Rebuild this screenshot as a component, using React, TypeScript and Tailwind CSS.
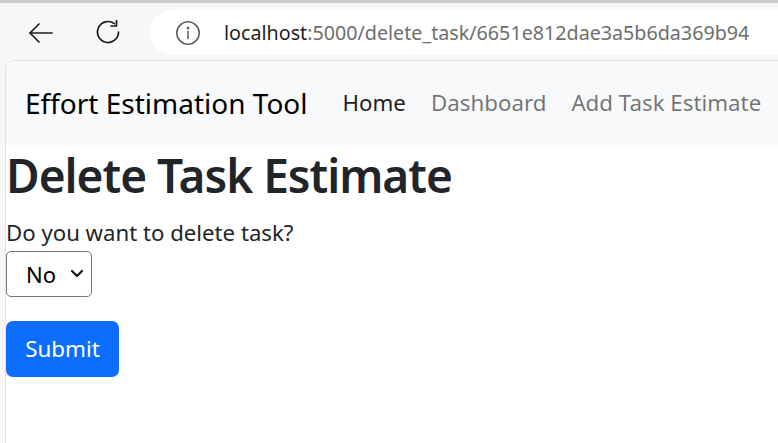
import React from "react";

const BackIcon = () => (
  <svg width="26" height="22" viewBox="0 0 26 22" fill="none" stroke="#1f1f1f" strokeWidth="1.7" strokeLinecap="round" strokeLinejoin="round">
    <path d="M24 11H2" />
    <path d="M11 2L2 11l9 9" />
  </svg>
);

const ReloadIcon = () => (
  <svg width="26" height="26" viewBox="0 0 26 26" fill="none" stroke="#1f1f1f" strokeWidth="1.7" strokeLinecap="round" strokeLinejoin="round">
    <path d="M23.5 13A10.5 10.5 0 1 1 19.4 4.7" />
    <path d="M21.5 1.5v5.5H16" />
  </svg>
);

const InfoIcon = () => (
  <svg width="26" height="26" viewBox="0 0 26 26" fill="none" stroke="#5f6368" strokeWidth="1.6">
    <circle cx="13" cy="13" r="11.2" />
    <path d="M13 11.5v7" strokeLinecap="round" />
    <circle cx="13" cy="8" r="0.7" fill="#5f6368" />
  </svg>
);

export default function App() {
  return (
    <div className="w-[778px] h-[443px] bg-[#f7f7f7] overflow-hidden flex flex-col font-['Noto_Sans',sans-serif]">
      <div className="h-[3px] bg-[#cccccc]" />
      <div className="h-[57px] flex items-center">
        <div className="ml-[28px] mt-[3px] flex">
          <BackIcon />
        </div>
        <div className="ml-[41px] mt-[1px] flex">
          <ReloadIcon />
        </div>
        <div className="ml-[29px] mt-[2px] flex-1 h-[45px] bg-white rounded-l-full flex items-center">
          <div className="ml-[25px] flex">
            <InfoIcon />
          </div>
          <div className="ml-[23px] text-[19.7px] whitespace-nowrap">
            <span className="text-[#1f1f1f]">localhost</span>
            <span className="text-[#6e6e6e]">:5000/delete_task/6651e812dae3a5b6da369b94</span>
          </div>
        </div>
      </div>
      <div className="flex-1 ml-[5px] bg-white rounded-tl-[9px] border-l border-t border-[#e2e2e2] overflow-hidden">
        <nav className="h-[84px] bg-[#f8f9fa] flex items-center pl-[19px]">
          <span className="text-[28px] text-black">Effort Estimation Tool</span>
          <div className="flex ml-[35px] gap-[25px] text-[22.3px]">
            <a className="text-black/90">Home</a>
            <a className="text-black/55">Dashboard</a>
            <a className="text-black/55">Add Task Estimate</a>
          </div>
        </nav>
        <div className="text-[#212529]">
          <h1 className="text-[46px] font-semibold tracking-[-1px] leading-[55px] mt-[3px] whitespace-nowrap">Delete Task Estimate</h1>
          <label className="block mt-[14px] text-[22.2px] leading-[32px] whitespace-nowrap">Do you want to delete task?</label>
          <div className="relative w-[86px] h-[46px] mt-[2px]">
            <select className="w-full h-full appearance-none border border-[#767676] rounded-[5px] bg-white text-[22px] pl-[19px] text-black outline-none">
              <option>No</option>
              <option>Yes</option>
            </select>
            <svg className="absolute right-[8px] top-[18px] pointer-events-none" width="14" height="10" viewBox="0 0 14 10" fill="none" stroke="#111" strokeWidth="2.2" strokeLinecap="round" strokeLinejoin="round">
              <path d="M2 2l5 5 5-5" />
            </svg>
          </div>
          <button className="block mt-[24px] h-[56px] w-[113px] bg-[#0d6efd] text-white text-[22.4px] rounded-[7px]">Submit</button>
        </div>
      </div>
    </div>
  );
}
